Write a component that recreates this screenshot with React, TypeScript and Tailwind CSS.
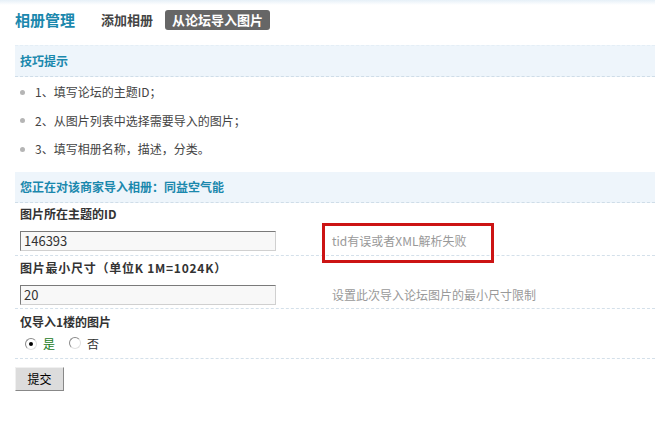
import React from "react";

const font = { fontFamily: '"Noto Sans CJK SC", "Liberation Sans", sans-serif' };

function Radio({ checked }: { checked?: boolean }) {
  return (
    <span className="relative inline-block w-[12px] h-[12px] rounded-full border border-t-[#8a8a8a] border-l-[#8a8a8a] border-r-[#e0e0e0] border-b-[#e0e0e0] bg-white">
      {checked && <span className="absolute left-[3px] top-[3px] w-[4px] h-[4px] rounded-full bg-black" />}
    </span>
  );
}

function Input({ value }: { value: string }) {
  return (
    <div className="w-[256px] h-[20px] bg-[#f8f8f8] border border-t-[#7a7a7a] border-l-[#7a7a7a] border-r-[#d0d0d0] border-b-[#d0d0d0] pl-[3px] text-[13px] leading-[18px] text-[#333]">
      {value}
    </div>
  );
}

export default function App() {
  return (
    <div className="w-[655px] h-[427px] bg-white relative overflow-hidden text-[12px] text-[#333]" style={font}>
      <div className="h-[5px] bg-gradient-to-b from-[#e6f0f8] to-white" />
      {/* header */}
      <div className="h-[40px] pl-[15px] flex items-center">
        <div className="text-[15px] font-bold text-[#1a88ad] leading-[20px] mt-[-10px]">相册管理</div>
        <div className="ml-[26px] text-[13px] font-bold text-[#444] mt-[-10px]">添加相册</div>
        <div className="ml-[12px] mt-[-10px] h-[20px] px-[7px] rounded-[3px] bg-[#666] text-white text-[13px] font-bold leading-[20px]">从论坛导入图片</div>
      </div>
      <div className="pl-[15px]">
        <div className="h-[32px] bg-[#eef5fb] border-t border-[#e4eef6] border-b border-dashed border-b-[#cfdde8] pl-[5px] flex items-center">
          <span className="font-bold text-[#1a88ad] text-[12px]">技巧提示</span>
        </div>
        <ul className="pt-[1px] pb-[8px]">
          {["1、填写论坛的主题ID；", "2、从图片列表中选择需要导入的图片；", "3、填写相册名称，描述，分类。"].map((t) => (
            <li key={t} className="h-[28.5px] flex items-center text-[12px] text-[#444]">
              <span className="ml-[5px] w-[5px] h-[5px] rounded-full bg-[#b5b5b5]" />
              <span className="ml-[10px]">{t}</span>
            </li>
          ))}
        </ul>
        <div className="h-[31px] bg-[#eef5fb] border-b border-dashed border-[#cfdde8] pl-[5px] flex items-center">
          <span className="font-bold text-[#1a88ad] text-[12px]">您正在对该商家导入相册：同益空气能</span>
        </div>
        <div className="pl-[5px] pt-[1px] pb-[4px] border-b border-dashed border-[#d4e0ea]">
          <div className="h-[20px] leading-[20px] font-bold text-[#333]">图片所在主题的ID</div>
          <div className="mt-[7px] flex items-center">
            <Input value="146393" />
            <span className="ml-[56px] text-[#999]">tid有误或者XML解析失败</span>
          </div>
        </div>
        <div className="pl-[5px] pt-[2px] pb-[3px] border-b border-dashed border-[#d4e0ea]">
          <div className="h-[20px] leading-[20px] font-bold text-[#333] tracking-[0.75px]">图片最小尺寸（单位K 1M=1024K）</div>
          <div className="mt-[7px] flex items-center">
            <Input value="20" />
            <span className="ml-[56px] text-[#999]">设置此次导入论坛图片的最小尺寸限制</span>
          </div>
        </div>
        <div className="pl-[5px] pt-[3px] pb-[4px] border-b border-dashed border-[#d4e0ea]">
          <div className="h-[20px] leading-[20px] font-bold text-[#333]">仅导入1楼的图片</div>
          <div className="mt-[2px] h-[20px] flex items-center pl-[5px]">
            <Radio checked />
            <span className="ml-[6px] text-[#1a7a1a]">是</span>
            <span className="ml-[14px]"><Radio /></span>
            <span className="ml-[6px] text-[#333]">否</span>
          </div>
        </div>
        <button className="mt-[8px] w-[49px] h-[24px] bg-[#dcdcdc] border border-t-[#f0f0f0] border-l-[#f0f0f0] border-r-[#888] border-b-[#888] text-[12px] text-black">
          提交
        </button>
      </div>
      {/* annotation box */}
      <div className="absolute left-[322px] top-[223px] w-[172px] h-[40px] border-[3px] border-[#cc1414]" />
    </div>
  );
}
